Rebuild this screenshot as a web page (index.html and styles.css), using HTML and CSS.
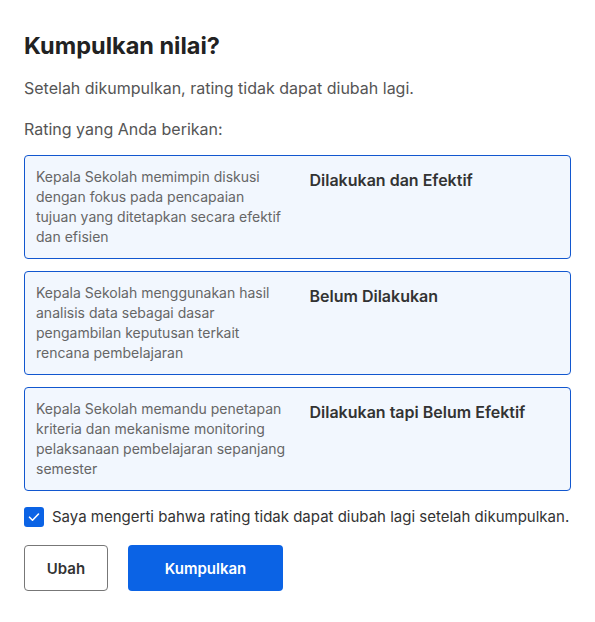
FILE: index.html
```html
<!DOCTYPE html>
<html lang="id">
<head>
    <meta charset="UTF-8">
    <meta name="viewport" content="width=device-width, initial-scale=1.0">
    <link rel="stylesheet" href="styles.css">
</head>
<body>

    <div class="dialog">
        <h1 class="title">Kumpulkan nilai?</h1>
        <p class="subtitle">Setelah dikumpulkan, rating tidak dapat diubah lagi.</p>
        <p class="label">Rating yang Anda berikan:</p>

        <div class="rating-list">
            <div class="rating-card">
                <div class="rating-desc">Kepala Sekolah memimpin diskusi dengan fokus pada pencapaian tujuan yang ditetapkan secara efektif dan efisien</div>
                <div class="rating-value">Dilakukan dan Efektif</div>
            </div>
            <div class="rating-card">
                <div class="rating-desc">Kepala Sekolah menggunakan hasil analisis data sebagai dasar pengambilan keputusan terkait rencana pembelajaran</div>
                <div class="rating-value">Belum Dilakukan</div>
            </div>
            <div class="rating-card">
                <div class="rating-desc">Kepala Sekolah memandu penetapan kriteria dan mekanisme monitoring pelaksanaan pembelajaran sepanjang semester</div>
                <div class="rating-value">Dilakukan tapi Belum Efektif</div>
            </div>
        </div>

        <label class="confirm">
            <span class="check-box">
                <svg width="14" height="14" viewBox="0 0 14 14"><path d="M2.5 7.2l3 3 6-6.2" fill="none" stroke="white" stroke-width="1.6" stroke-linecap="round" stroke-linejoin="round"/></svg>
            </span>
            Saya mengerti bahwa rating tidak dapat diubah lagi setelah dikumpulkan.
        </label>

        <div class="actions">
            <button class="btn btn-outline">Ubah</button>
            <button class="btn btn-primary">Kumpulkan</button>
        </div>
    </div>

</body>
</html>
```

FILE: styles.css
```css
body {
    font-family: 'Inter', sans-serif;
    background-color: #ffffff;
    margin: 0;
    padding: 0;
    color: #333333;
}

.dialog {
    padding: 32px 24px 24px;
}

.title {
    font-size: 23.5px;
    font-weight: 700;
    line-height: 28px;
    margin: 0;
    color: #222222;
}

.subtitle {
    font-size: 16px;
    line-height: 24px;
    color: #555555;
    margin: 16px 0 0;
}

.label {
    font-size: 16px;
    line-height: 24px;
    color: #555555;
    margin: 17px 0 0;
}

.rating-list {
    display: flex;
    flex-direction: column;
    gap: 12px;
    margin-top: 14px;
}

.rating-card {
    box-sizing: border-box;
    display: grid;
    grid-template-columns: 1fr 1fr;
    gap: 24px;
    padding: 11px;
    border: 1px solid #1257cf;
    border-radius: 4px;
    background-color: #f2f7fe;
    height: 104px;
}

.rating-desc {
    font-size: 14px;
    line-height: 20px;
    color: #666666;
}

.rating-value {
    font-size: 16px;
    font-weight: 600;
    line-height: 26px;
    color: #333333;
}

.confirm {
    display: flex;
    align-items: center;
    gap: 8px;
    margin-top: 16px;
    font-size: 15px;
    line-height: 20px;
    color: #333333;
}

.check-box {
    width: 20px;
    height: 20px;
    border-radius: 3px;
    background-color: #0b63e5;
    display: flex;
    align-items: center;
    justify-content: center;
}

.actions {
    display: flex;
    gap: 20px;
    margin-top: 18px;
}

.btn {
    font-family: 'Inter', sans-serif;
    font-size: 15px;
    font-weight: 600;
    height: 46px;
    border-radius: 4px;
    cursor: pointer;
}

.btn-outline {
    background: white;
    border: 1px solid #777777;
    color: #333333;
    width: 84px;
}

.btn-primary {
    background-color: #0b63e5;
    border: none;
    color: white;
    width: 155px;
}
```
